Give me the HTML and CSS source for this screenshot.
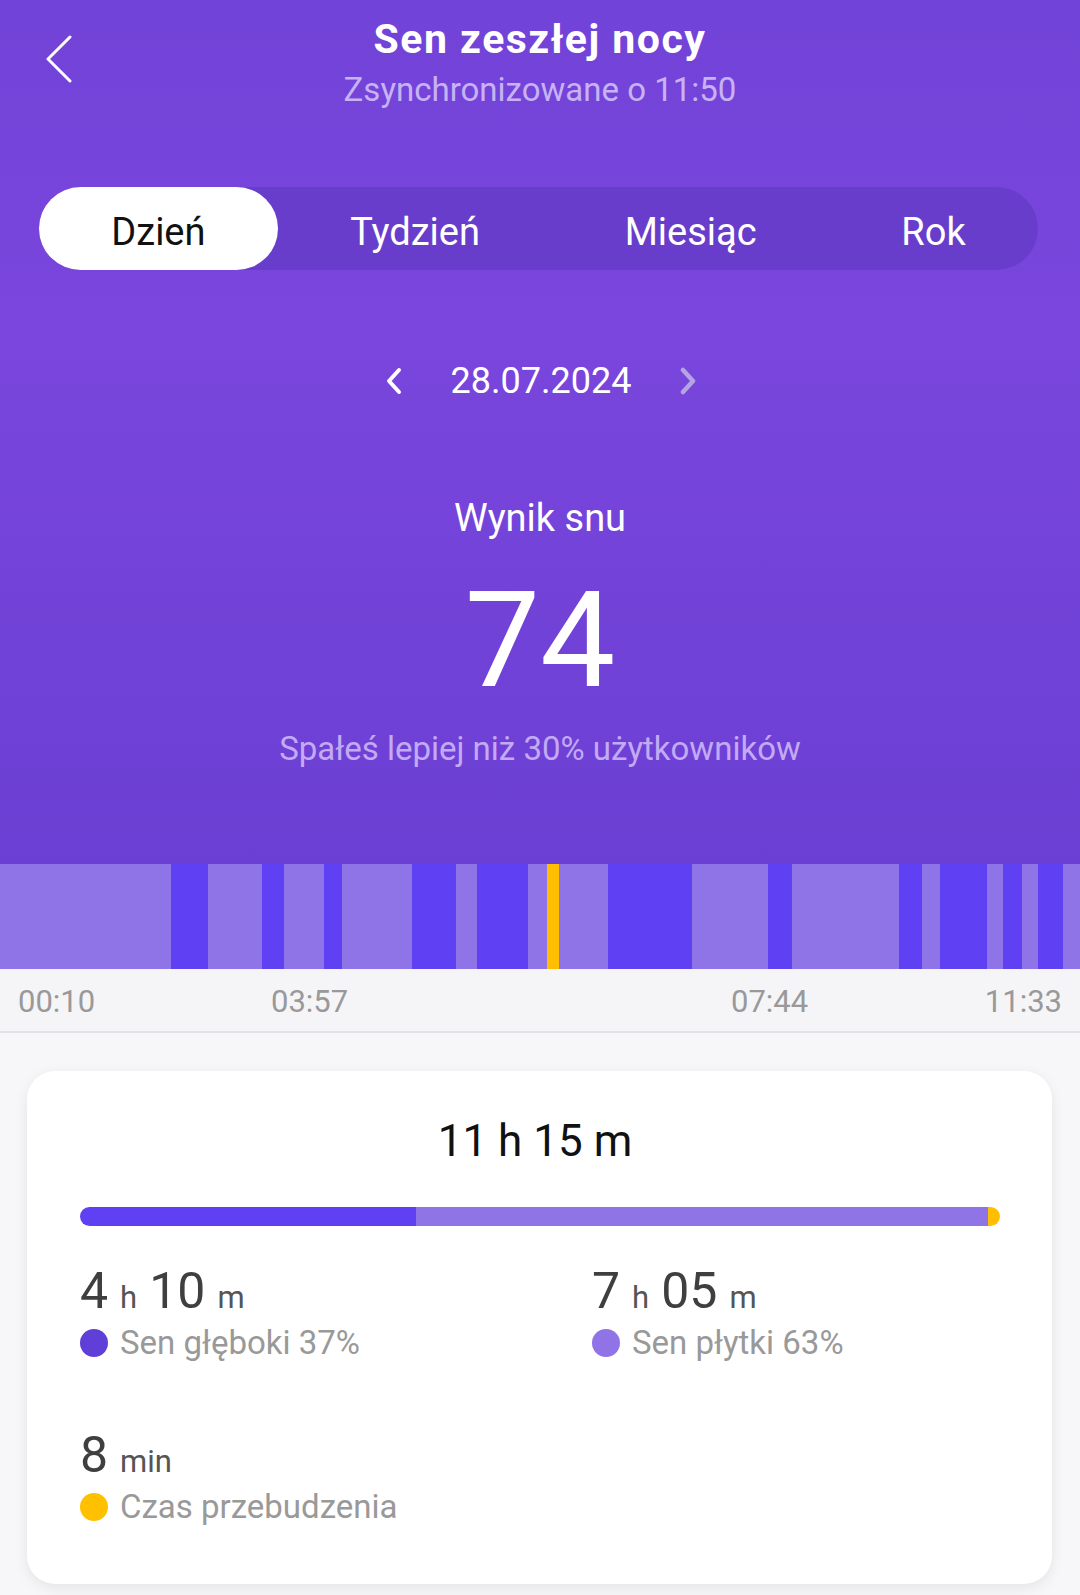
FILE: index.html
```html
<!DOCTYPE html>
<html lang="pl">
  <head>
    <meta charset="UTF-8" />
    <meta name="viewport" content="width=device-width, initial-scale=1.0" />
    <title>Sen zeszłej nocy</title>
    <link rel="stylesheet" href="styles.css">
  </head>
  <body>
    <div class="hero">
      <header class="top-bar">
        <button class="back" aria-label="Wstecz">
          <svg width="28" height="48" viewBox="0 0 28 48">
            <polyline points="25,2 3,24 25,46" fill="none" stroke="#fff" stroke-width="3" stroke-linecap="round" stroke-linejoin="round" />
          </svg>
        </button>
        <div class="titles">
          <h1>Sen zeszłej nocy</h1>
          <p class="synced">Zsynchronizowane o 11:50</p>
        </div>
        <span></span>
      </header>

      <nav class="tabs">
        <a class="tab active">Dzień</a>
        <a class="tab">Tydzień</a>
        <a class="tab">Miesiąc</a>
        <a class="tab">Rok</a>
      </nav>

      <div class="date-nav">
        <svg class="arrow" width="18" height="28" viewBox="0 0 18 28">
          <polyline points="14,3 4,14 14,25" fill="none" stroke="#fff" stroke-width="4" stroke-linecap="round" stroke-linejoin="round" />
        </svg>
        <span class="date">28.07.2024</span>
        <svg class="arrow" width="18" height="28" viewBox="0 0 18 28">
          <polyline points="4,3 14,14 4,25" fill="none" stroke="#b5a4e2" stroke-width="4.5" stroke-linecap="round" stroke-linejoin="round" />
        </svg>
      </div>

      <div class="score">
        <p class="score-label">Wynik snu</p>
        <p class="score-value">74</p>
        <p class="score-note">Spałeś lepiej niż 30% użytkowników</p>
      </div>
    </div>

    <div class="timeline">
      <span class="seg light" style="width:171px"></span>
      <span class="seg deep" style="width:37px"></span>
      <span class="seg light" style="width:54px"></span>
      <span class="seg deep" style="width:22px"></span>
      <span class="seg light" style="width:40px"></span>
      <span class="seg deep" style="width:18px"></span>
      <span class="seg light" style="width:70px"></span>
      <span class="seg deep" style="width:44px"></span>
      <span class="seg light" style="width:21px"></span>
      <span class="seg deep" style="width:51px"></span>
      <span class="seg light" style="width:19px"></span>
      <span class="seg awake" style="width:12px"></span>
      <span class="seg light" style="width:49px"></span>
      <span class="seg deep" style="width:84px"></span>
      <span class="seg light" style="width:76px"></span>
      <span class="seg deep" style="width:24px"></span>
      <span class="seg light" style="width:107px"></span>
      <span class="seg deep" style="width:23px"></span>
      <span class="seg light" style="width:18px"></span>
      <span class="seg deep" style="width:47px"></span>
      <span class="seg light" style="width:16px"></span>
      <span class="seg deep" style="width:19px"></span>
      <span class="seg light" style="width:16px"></span>
      <span class="seg deep" style="width:25px"></span>
      <span class="seg light" style="width:17px"></span>
    </div>
    <div class="axis">
      <span>00:10</span>
      <span>03:57</span>
      <span>07:44</span>
      <span>11:33</span>
    </div>

    <main class="content">
      <section class="card">
        <h2 class="total">11 h 15 m</h2>
        <div class="split-bar">
          <span class="part deep" style="width:36.5%"></span>
          <span class="part light"></span>
          <span class="part awake"></span>
        </div>
        <div class="stats">
          <div class="stat">
            <div class="stat-value"><span>4</span><small>h</small><span>10</span><small>m</small></div>
            <div class="stat-name"><i class="dot deep"></i>Sen głęboki 37%</div>
          </div>
          <div class="stat">
            <div class="stat-value"><span>7</span><small>h</small><span>05</span><small>m</small></div>
            <div class="stat-name"><i class="dot light"></i>Sen płytki 63%</div>
          </div>
          <div class="stat">
            <div class="stat-value"><span>8</span><small>min</small></div>
            <div class="stat-name"><i class="dot awake"></i>Czas przebudzenia</div>
          </div>
        </div>
      </section>
    </main>
  </body>
</html>
```

FILE: styles.css
```css
body {
  margin: 0;
  font-family: Roboto, "Noto Sans", sans-serif;
  background-color: #f7f7f9;
}
p,
h1,
h2 {
  margin: 0;
  font-weight: normal;
}

/* purple top part */
.hero {
  background: linear-gradient(180deg, #7243d8 0%, #7a46dd 38%, #6b3fd3 100%);
  color: #fff;
  padding: 16px 0 95px;
}
.top-bar {
  display: grid;
  grid-template-columns: 1fr auto 1fr;
}
.back {
  justify-self: start;
  align-self: start;
  margin: 19px 0 0 45px;
  padding: 0;
  border: none;
  background: none;
  display: flex;
}
.titles {
  text-align: center;
}
.titles h1 {
  font-size: 41px;
  line-height: 46px;
  font-weight: 700;
  letter-spacing: 1.5px;
}
.synced {
  margin-top: 8px;
  font-size: 33px;
  line-height: 40px;
  color: #c7b3f4;
}

.tabs {
  display: flex;
  margin: 77px 42px 0 39px;
  height: 83px;
  border-radius: 42px;
  background-color: #693dcb;
}
.tab {
  flex: 1 1 auto;
  text-align: center;
  font-size: 38px;
  line-height: 76px;
  padding-top: 7px;
  border-radius: 42px;
  color: #fff;
}
.tab.active {
  background: #fff;
  color: #111;
}

.date-nav {
  display: flex;
  justify-content: center;
  align-items: center;
  gap: 48px;
  margin-top: 89px;
  margin-left: 2px;
}
.date {
  font-size: 36px;
  line-height: 44px;
}

.score {
  text-align: center;
  margin-top: 92px;
}
.score-label {
  font-size: 38px;
  line-height: 46px;
}
.score-value {
  margin-top: 33px;
  font-size: 134px;
  line-height: 134px;
}
.score-note {
  margin-top: 21px;
  font-size: 33px;
  line-height: 40px;
  color: #c3aaf4;
}

/* sleep stages chart */
.timeline {
  display: flex;
  height: 105px;
}
.seg {
  flex: none;
}
.light {
  background-color: #8f74e8;
}
.deep {
  background-color: #5f40f3;
}
.awake {
  background-color: #ffbe00;
}
.axis {
  display: grid;
  grid-template-columns: 253px 460px 1fr auto;
  padding: 2px 18px 0;
  height: 60px;
  line-height: 62px;
  font-size: 31px;
  color: #999;
  background-color: #f5f5f8;
  border-bottom: 2px solid #e3e3e7;
}

/* summary card */
.content {
  padding: 38px 28px 11px 27px;
}
.card {
  background: #fff;
  border-radius: 28px;
  box-shadow: 0 4px 14px rgba(0, 0, 0, 0.08);
  padding: 44px 52px 57px 53px;
}
.total {
  text-align: center;
  font-size: 44px;
  line-height: 52px;
  padding-right: 10px;
  color: #111;
}
.split-bar {
  display: flex;
  height: 19px;
  margin-top: 40px;
  border-radius: 10px;
  overflow: hidden;
}
.split-bar .light {
  flex: 1;
}
.split-bar .awake {
  width: 12px;
}
.stats {
  display: grid;
  grid-template-columns: 512px 1fr;
  row-gap: 63px;
  margin-top: 36px;
}
.stat-value {
  display: flex;
  align-items: baseline;
  gap: 12px;
  height: 58px;
  font-size: 50px;
  line-height: 58px;
  color: #3f3f3f;
}
.stat-value small {
  font-size: 31px;
  line-height: 40px;
  color: #555;
}
.stat-name {
  display: flex;
  align-items: center;
  gap: 12px;
  margin-top: 3px;
  font-size: 33px;
  line-height: 40px;
  color: #999;
}
.dot {
  width: 28px;
  height: 28px;
  border-radius: 50%;
}
.dot.deep {
  background-color: #603fd8;
}
.dot.light {
  background-color: #9173e8;
}
.dot.awake {
  background-color: #ffc000;
}
```
